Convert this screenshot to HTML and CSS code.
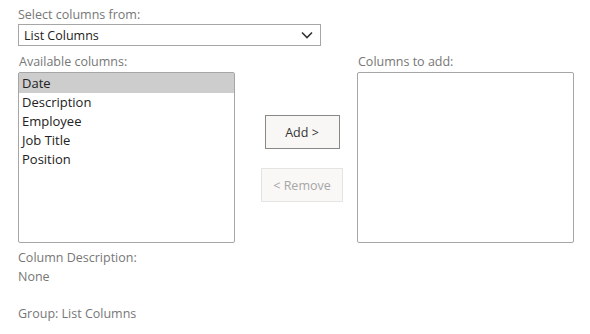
FILE: index.html
```html
<!DOCTYPE html>
<html lang="en">
<head>
  <meta charset="UTF-8">
  <title>Add columns</title>
  <link rel="stylesheet" href="styles.css">
</head>
<body>

<div class="picker">
  <div class="label">Select columns from:</div>
  <div class="select">
    <span>List Columns</span>
    <svg class="chevron" width="12" height="8" viewBox="0 0 12 8">
      <path d="M1 1.5 L6 6.5 L11 1.5" fill="none" stroke="#333" stroke-width="1.6"/>
    </svg>
  </div>

  <div class="columns">
    <div class="col-list">
      <div class="label">Available columns:</div>
      <div class="listbox">
        <div class="item selected">Date</div>
        <div class="item">Description</div>
        <div class="item">Employee</div>
        <div class="item">Job Title</div>
        <div class="item">Position</div>
      </div>
    </div>

    <div class="col-buttons">
      <button class="btn add">Add &gt;</button>
      <button class="btn remove">&lt; Remove</button>
    </div>

    <div class="col-list">
      <div class="label">Columns to add:</div>
      <div class="listbox"></div>
    </div>
  </div>

  <div class="info">
    <div>Column Description:</div>
    <div>None</div>
    <div class="group">Group: List Columns</div>
  </div>
</div>

</body>
</html>
```

FILE: styles.css
```css
body {
  margin: 0;
  font-family: "Open Sans", "Noto Sans", sans-serif;
  font-size: 12.5px;
  color: #333;
  background: #fff;
}
.picker {
  padding: 5px 0 0 18px;
}
.label {
  color: #777;
  line-height: 19px;
}
.select {
  width: 289px;
  height: 20px;
  border: 1px solid #a6a6a6;
  display: flex;
  align-items: center;
  justify-content: space-between;
  padding: 0 7px 0 5px;
}
.select span {
  color: #222;
}
.columns {
  display: flex;
  margin-top: 6px;
}
.col-list .label {
  padding-left: 1px;
}
.listbox {
  width: 215px;
  height: 169px;
  margin-top: 1px;
  border: 1px solid #a6a6a6;
  border-radius: 2px;
}
.item {
  height: 19px;
  line-height: 19px;
  padding-left: 3px;
  font-size: 13px;
  color: #222;
}
.item.selected {
  background: #cdcdcd;
  height: 20px;
  line-height: 20px;
}
.col-buttons {
  width: 110px;
  padding-left: 12px;
  padding-top: 63px;
  display: flex;
  flex-direction: column;
  align-items: center;
  gap: 19px;
}
.btn {
  font-family: inherit;
  font-size: 12.5px;
  height: 34px;
  padding: 0;
  white-space: nowrap;
  background: #f8f7f5;
  border: 1px solid #8a8886;
  color: #333;
}
.btn.add {
  width: 75px;
}
.btn.remove {
  width: 82px;
  color: #a6a6a6;
  border-color: #e6e4e2;
  background: #f9f8f7;
}
.info {
  color: #777;
  line-height: 19px;
  padding-top: 5px;
}
.info .group {
  margin-top: 18px;
}
```
